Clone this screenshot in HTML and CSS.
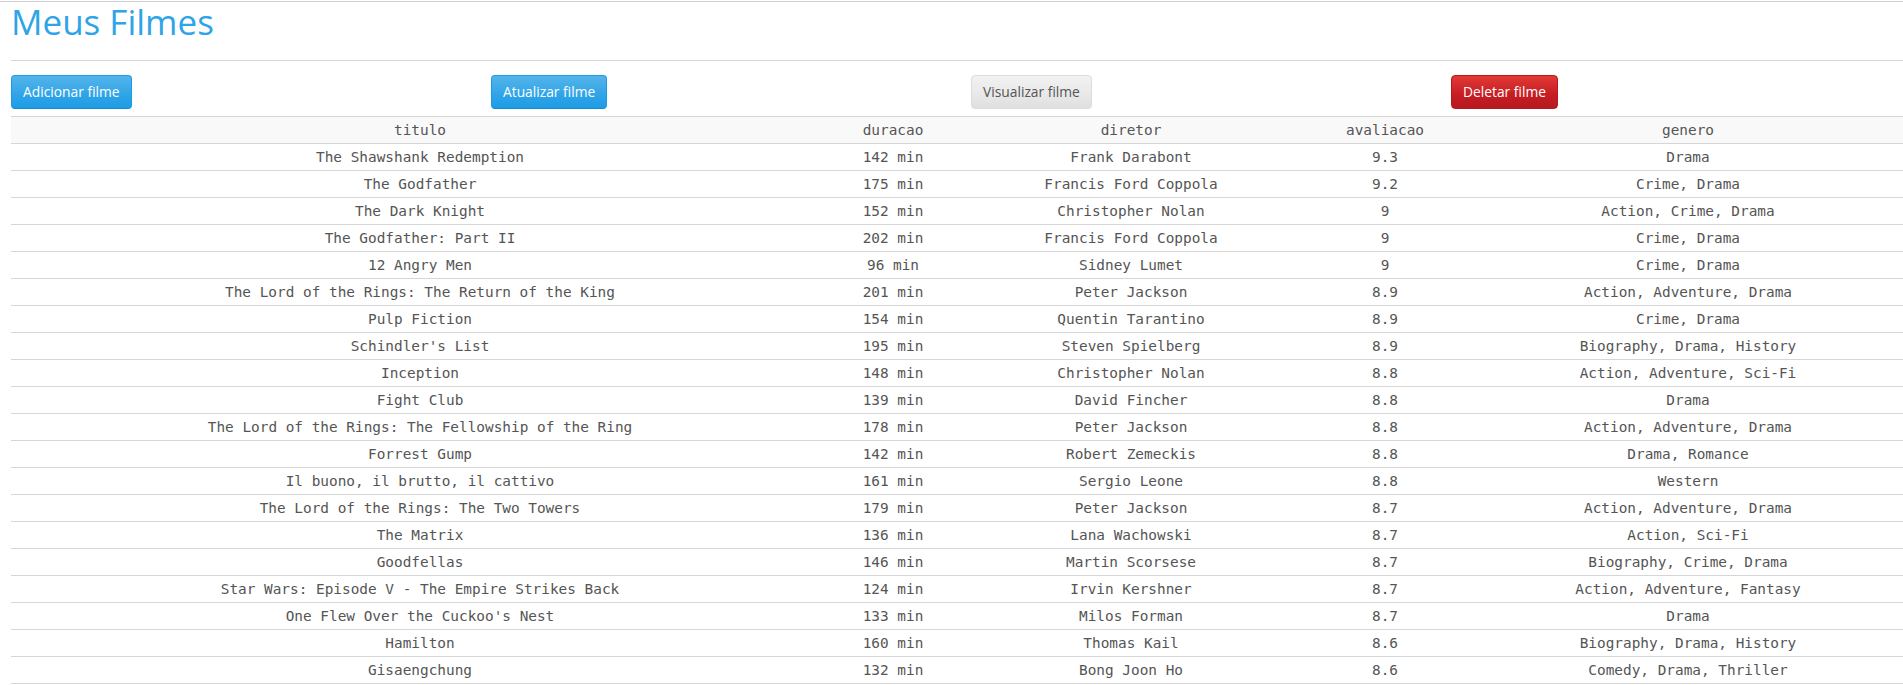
FILE: index.html
```html
<!DOCTYPE html>
<html lang="pt">
<head>
<meta charset="utf-8">
<title>Meus Filmes</title>
<link rel="stylesheet" href="styles.css">
</head>
<body>
<div class="topline"></div>
<div class="page">
  <h1 class="title">Meus Filmes</h1>
  <div class="actions">
    <div class="cell"><button class="btn btn-primary">Adicionar filme</button></div>
    <div class="cell"><button class="btn btn-primary">Atualizar filme</button></div>
    <div class="cell"><button class="btn btn-default">Visualizar filme</button></div>
    <div class="cell"><button class="btn btn-danger">Deletar filme</button></div>
  </div>
  <table class="movies">
    <colgroup>
      <col class="c-titulo"><col class="c-duracao"><col class="c-diretor"><col class="c-avaliacao"><col class="c-genero">
    </colgroup>
    <thead>
      <tr><th>titulo</th><th>duracao</th><th>diretor</th><th>avaliacao</th><th>genero</th></tr>
    </thead>
    <tbody>
      <tr><td>The Shawshank Redemption</td><td>142 min</td><td>Frank Darabont</td><td>9.3</td><td>Drama</td></tr>
      <tr><td>The Godfather</td><td>175 min</td><td>Francis Ford Coppola</td><td>9.2</td><td>Crime, Drama</td></tr>
      <tr><td>The Dark Knight</td><td>152 min</td><td>Christopher Nolan</td><td>9</td><td>Action, Crime, Drama</td></tr>
      <tr><td>The Godfather: Part II</td><td>202 min</td><td>Francis Ford Coppola</td><td>9</td><td>Crime, Drama</td></tr>
      <tr><td>12 Angry Men</td><td>96 min</td><td>Sidney Lumet</td><td>9</td><td>Crime, Drama</td></tr>
      <tr><td>The Lord of the Rings: The Return of the King</td><td>201 min</td><td>Peter Jackson</td><td>8.9</td><td>Action, Adventure, Drama</td></tr>
      <tr><td>Pulp Fiction</td><td>154 min</td><td>Quentin Tarantino</td><td>8.9</td><td>Crime, Drama</td></tr>
      <tr><td>Schindler's List</td><td>195 min</td><td>Steven Spielberg</td><td>8.9</td><td>Biography, Drama, History</td></tr>
      <tr><td>Inception</td><td>148 min</td><td>Christopher Nolan</td><td>8.8</td><td>Action, Adventure, Sci-Fi</td></tr>
      <tr><td>Fight Club</td><td>139 min</td><td>David Fincher</td><td>8.8</td><td>Drama</td></tr>
      <tr><td>The Lord of the Rings: The Fellowship of the Ring</td><td>178 min</td><td>Peter Jackson</td><td>8.8</td><td>Action, Adventure, Drama</td></tr>
      <tr><td>Forrest Gump</td><td>142 min</td><td>Robert Zemeckis</td><td>8.8</td><td>Drama, Romance</td></tr>
      <tr><td>Il buono, il brutto, il cattivo</td><td>161 min</td><td>Sergio Leone</td><td>8.8</td><td>Western</td></tr>
      <tr><td>The Lord of the Rings: The Two Towers</td><td>179 min</td><td>Peter Jackson</td><td>8.7</td><td>Action, Adventure, Drama</td></tr>
      <tr><td>The Matrix</td><td>136 min</td><td>Lana Wachowski</td><td>8.7</td><td>Action, Sci-Fi</td></tr>
      <tr><td>Goodfellas</td><td>146 min</td><td>Martin Scorsese</td><td>8.7</td><td>Biography, Crime, Drama</td></tr>
      <tr><td>Star Wars: Episode V - The Empire Strikes Back</td><td>124 min</td><td>Irvin Kershner</td><td>8.7</td><td>Action, Adventure, Fantasy</td></tr>
      <tr><td>One Flew Over the Cuckoo's Nest</td><td>133 min</td><td>Milos Forman</td><td>8.7</td><td>Drama</td></tr>
      <tr><td>Hamilton</td><td>160 min</td><td>Thomas Kail</td><td>8.6</td><td>Biography, Drama, History</td></tr>
      <tr><td>Gisaengchung</td><td>132 min</td><td>Bong Joon Ho</td><td>8.6</td><td>Comedy, Drama, Thriller</td></tr>
    </tbody>
  </table>
</div>
</body>
</html>
```
FILE: styles.css
```css
html {
  overflow: hidden;
}
body {
  margin: 0;
  background: #fff;
  color: #555;
  font-family: "Open Sans", "Liberation Sans", sans-serif;
}
.topline {
  height: 1px;
  margin-top: 1px;
  background: #cfcfcf;
}
.page {
  padding-left: 11px;
  width: 1900px;
}
.title {
  margin: 0;
  padding-bottom: 18px;
  border-bottom: 1px solid #d6d6d6;
  font-size: 35px;
  line-height: 40px;
  font-weight: 400;
  color: #2fa4e7;
}
.actions {
  display: grid;
  grid-template-columns: repeat(4, 480px);
  margin-top: 14px;
}
.btn {
  display: inline-block;
  height: 34px;
  padding: 0 11px;
  font-family: "Open Sans", "Liberation Sans", sans-serif;
  font-size: 13.8px;
  line-height: 32px;
  border-radius: 4px;
  border: 1px solid transparent;
  cursor: pointer;
}
.btn-primary {
  color: #fff;
  background: linear-gradient(#54b4eb, #2fa4e7 60%, #1d9ce5);
  border-color: #1d9ce5;
  border-bottom-color: #178acc;
}
.btn-default {
  color: #555;
  background: linear-gradient(#f2f2f2, #e8e8e8 60%, #dfdfdf);
  border-color: #dcdcdc;
}
.btn-danger {
  color: #fff;
  background: linear-gradient(#e03a35, #c71c22 60%, #b5191f);
  border-color: #b5191f;
}
.movies {
  margin-top: 7px;
  width: 1900px;
  border-collapse: collapse;
  table-layout: fixed;
  font-family: "DejaVu Sans Mono", "Liberation Mono", monospace;
  font-size: 14.4px;
  color: #555;
}
.c-titulo { width: 818px; }
.c-duracao { width: 128px; }
.c-diretor { width: 348px; }
.c-avaliacao { width: 160px; }
.c-genero { width: 446px; }
.movies th,
.movies td {
  height: 26px;
  padding: 0;
  text-align: center;
  font-weight: 400;
  border-top: 1px solid #d6d6d6;
  border-bottom: 1px solid #d6d6d6;
  white-space: nowrap;
}
.movies thead th {
  background: #f9f9f9;
}
```
